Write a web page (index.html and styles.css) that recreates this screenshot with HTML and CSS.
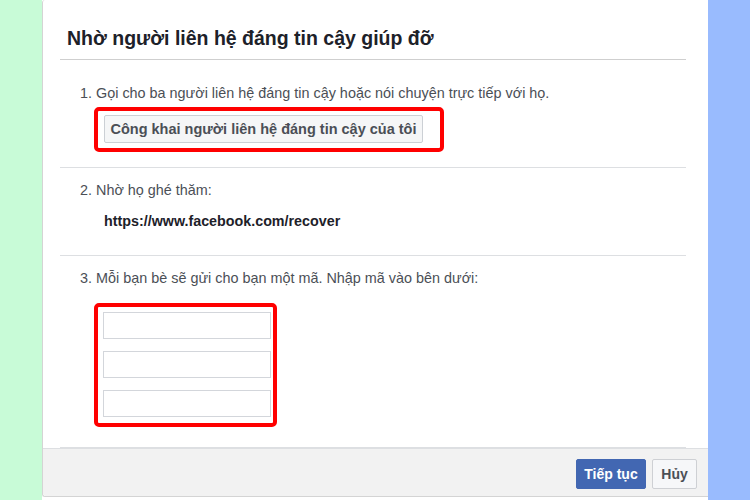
FILE: index.html
```html
<!DOCTYPE html>
<html lang="vi">
<head>
<meta charset="utf-8">
<title>Nhờ người liên hệ đáng tin cậy giúp đỡ</title>
<link rel="stylesheet" href="styles.css">
</head>
<body>
<div class="page">
  <div class="side side-left"></div>
  <div class="dialog">
    <div class="dialog-header">
      <h1 class="title">Nhờ người liên hệ đáng tin cậy giúp đỡ</h1>
    </div>
    <div class="section section-first">
      <p class="step">1. Gọi cho ba người liên hệ đáng tin cậy hoặc nói chuyện trực tiếp với họ.</p>
      <div class="highlight highlight-btn">
        <button class="btn-reveal" type="button">Công khai người liên hệ đáng tin cậy của tôi</button>
      </div>
    </div>
    <div class="section section-mid">
      <p class="step">2. Nhờ họ ghé thăm:</p>
      <p class="url">https://www.facebook.com/recover</p>
    </div>
    <div class="section section-last">
      <p class="step">3. Mỗi bạn bè sẽ gửi cho bạn một mã. Nhập mã vào bên dưới:</p>
      <div class="highlight highlight-codes">
        <input class="code" type="text">
        <input class="code" type="text">
        <input class="code" type="text">
      </div>
    </div>
    <div class="dialog-footer">
      <button class="btn btn-primary" type="button">Tiếp tục</button>
      <button class="btn btn-secondary" type="button">Hủy</button>
    </div>
  </div>
  <div class="side side-right"></div>
</div>
</body>
</html>
```

FILE: styles.css
```css
* { box-sizing: border-box; }
html, body { margin: 0; padding: 0; }
body {
  width: 750px;
  height: 500px;
  overflow: hidden;
  background: #ffffff;
  font-family: "Liberation Sans", Arial, sans-serif;
}
.page {
  display: flex;
  height: 500px;
}
.side { height: 500px; flex: none; }
.side-left { width: 42px; background: #c8fbd7; }
.side-right { width: 42px; background: #99bbfe; }
.dialog {
  width: 666px;
  height: 497px;
  flex: none;
  background: #fff;
  border-left: 1px solid #d4d4d4;
  border-bottom: 1px solid #d4d4d4;
  border-radius: 3px 0 0 3px;
  display: flex;
  flex-direction: column;
}
.dialog-header {
  margin: 0 22px 0 17px;
  padding: 27px 0 10px 7px;
  border-bottom: 1px solid #cfcfcf;
}
.title {
  margin: 0;
  font-size: 19.5px;
  line-height: 22px;
  font-weight: bold;
  color: #1d2129;
}
.section {
  margin: 0 22px 0 17px;
  padding: 14px 0 0 20px;
  border-bottom: 1px solid #dddfe2;
}
.section-first { padding-top: 25px; padding-bottom: 15px; }
.section-mid { padding-bottom: 26px; }
.section-last { padding-bottom: 20px; }
.step {
  margin: 0;
  font-size: 14.4px;
  line-height: 16px;
  color: #4b4f56;
}
.url {
  margin: 15px 0 0 24px;
  font-size: 14.3px;
  line-height: 16px;
  font-weight: bold;
  color: #1d2129;
}
.highlight {
  border: 4px solid #ff0000;
  border-radius: 5px;
  margin-left: 14px;
}
.highlight-btn {
  margin-top: 6px;
  width: 350px;
  height: 45px;
  padding: 4px 0 0 6px;
}
.btn-reveal {
  display: block;
  width: 319px;
  height: 28px;
  padding: 0;
  background: #f5f6f7;
  border: 1px solid #ccd0d5;
  border-radius: 2px;
  font-family: "Liberation Sans", Arial, sans-serif;
  font-size: 14.5px;
  font-weight: bold;
  color: #4b4f56;
}
.highlight-codes {
  margin-top: 17px;
  width: 183px;
  height: 124px;
  padding: 5px 0 0 5px;
  display: flex;
  flex-direction: column;
  gap: 12px;
}
.code {
  display: block;
  width: 168px;
  height: 27px;
  margin: 0;
  border: 1px solid #d3d6db;
  background: #fff;
}
.dialog-footer {
  margin-top: auto;
  height: 49px;
  background: #f2f2f2;
  border-top: 1px solid #dddfe2;
  border-radius: 0 0 0 3px;
  display: flex;
  justify-content: flex-end;
  align-items: flex-start;
  gap: 6px;
  padding: 10px 11px 0 0;
}
.btn {
  height: 30px;
  padding: 0;
  border-radius: 2px;
  font-family: "Liberation Sans", Arial, sans-serif;
  font-size: 14px;
  font-weight: bold;
}
.btn-primary {
  width: 70px;
  background: #4267b2;
  border: 1px solid #4267b2;
  color: #fff;
}
.btn-secondary {
  width: 45px;
  background: #f6f7f9;
  border: 1px solid #ced0d4;
  color: #4b4f56;
}
```
